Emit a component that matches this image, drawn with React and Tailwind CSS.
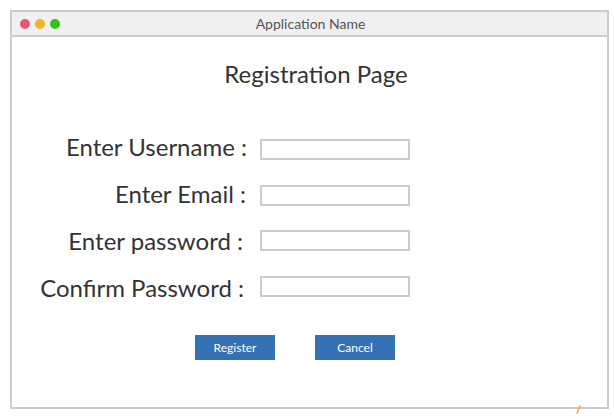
export default function App() {
  const fields = [
    { text: 'Enter Username :', pad: 'pr-0' },
    { text: 'Enter Email :', pad: 'pr-[1px]' },
    { text: 'Enter password :', pad: 'pr-[4px]' },
    { text: 'Confirm Password :', pad: 'pr-[3px]' },
  ];

  return (
    <div className="relative w-[614px] h-[418px] bg-white pt-[10px] pl-[10px]" style={{ fontFamily: 'Lato, "Open Sans", sans-serif' }}>
      <div className="w-[599px] h-[399px] border-2 border-[#cccccc] flex flex-col">
        <div className="relative h-[25px] bg-[#f0f0f0] border-b-2 border-[#cccccc] flex items-center pl-[8px] gap-[5px]">
          <span className="w-[10px] h-[10px] rounded-full bg-[#e9596a]" />
          <span className="w-[10px] h-[10px] rounded-full bg-[#f0b52a]" />
          <span className="w-[10px] h-[10px] rounded-full bg-[#33bf1f]" />
          <div className="absolute inset-0 flex items-center justify-center pl-[2px] text-[14px] text-[#555555]">
            Application Name
          </div>
        </div>

        <h1 className="mt-[22px] pl-[13px] text-center text-[24px] leading-[30px] text-[#333333]">Registration Page</h1>

        <div className="mt-[44px] flex items-start">
          <div className="w-[235px] flex flex-col gap-[19px]">
            {fields.map(f => (
              <label key={f.text} className={`${f.pad} text-right text-[24px] leading-[28px] text-[#333333] whitespace-nowrap`}>{f.text}</label>
            ))}
          </div>
          <div className="ml-[13px] mt-[6px] flex flex-col gap-[24.5px]">
            {fields.map(f => (
              <div key={f.text} className="w-[150px] h-[21px] border-2 border-[#cccccc] bg-white" />
            ))}
          </div>
        </div>

        <div className="mt-[33px] pl-[183px] flex gap-[40px]">
          <button className="w-[80px] h-[25px] bg-[#3571b5] text-white text-[12px]">Register</button>
          <button className="w-[80px] h-[25px] bg-[#3571b5] text-white text-[12px]">Cancel</button>
        </div>
      </div>

      <svg className="absolute left-[575px] top-[405px]" width="8" height="10" viewBox="0 0 8 10">
        <path d="M5 1 L2 8" stroke="#f4a33c" strokeWidth="1.5" strokeLinecap="round" />
      </svg>
    </div>
  );
}
